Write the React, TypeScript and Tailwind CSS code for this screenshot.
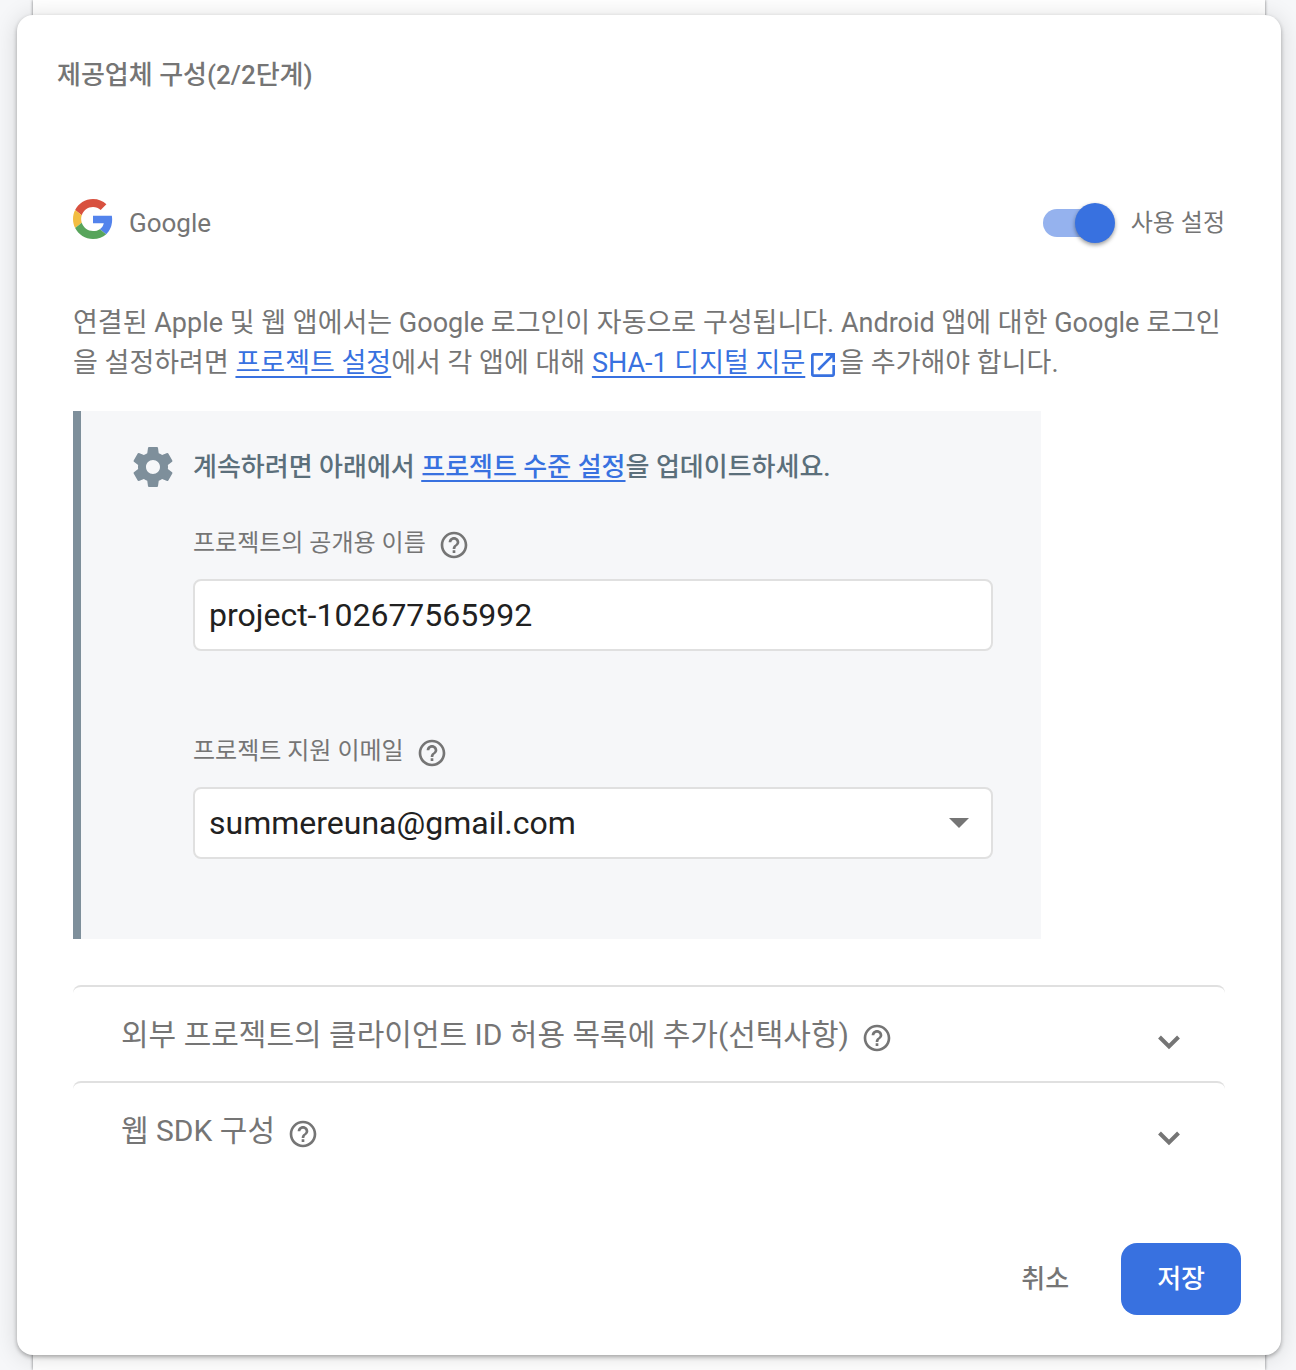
import { useState } from "react";
import { MdArrowDropDown, MdHelpOutline, MdOpenInNew } from "react-icons/md";

const linkClass = "text-[#3871e0] underline decoration-2 underline-offset-4";

const sections = [
  { id: "whitelist", title: "외부 프로젝트의 클라이언트 ID 허용 목록에 추가(선택사항)" },
  { id: "web-sdk", title: "웹 SDK 구성" },
];

function GoogleLogo() {
  return (
    <svg viewBox="0 0 48 48" className="h-10 w-10 shrink-0" aria-hidden="true">
      <path fill="#d8513f" d="M24 9.5c3.54 0 6.71 1.22 9.21 3.6l6.85-6.85C35.9 2.38 30.47 0 24 0 14.62 0 6.51 5.38 2.56 13.22l7.98 6.19C12.43 13.72 17.74 9.5 24 9.5z" />
      <path fill="#5383ec" d="M46.98 24.55c0-1.57-.15-3.09-.38-4.55H24v9.02h12.94c-.58 2.96-2.26 5.48-4.78 7.18l7.73 6c4.51-4.18 7.09-10.36 7.09-17.65z" />
      <path fill="#f2bd42" d="M10.53 28.59c-.48-1.45-.76-2.99-.76-4.59s.27-3.14.76-4.59l-7.98-6.19C.92 16.46 0 20.12 0 24c0 3.88.92 7.54 2.56 10.78l7.97-6.19z" />
      <path fill="#58a55c" d="M24 48c6.48 0 11.93-2.13 15.89-5.81l-7.73-6c-2.15 1.45-4.92 2.3-8.16 2.3-6.26 0-11.57-4.22-13.47-9.91l-7.98 6.19C6.51 42.62 14.62 48 24 48z" />
    </svg>
  );
}

function GearIcon() {
  return (
    <svg viewBox="0 0 24 24" fill="currentColor" className="h-12 w-12 shrink-0 text-[#7e8f9b]" aria-hidden="true">
      <path d="M19.43 12.98c.04-.32.07-.64.07-.98s-.03-.66-.07-.98l2.11-1.65c.19-.15.24-.42.12-.64l-2-3.46c-.12-.22-.39-.3-.61-.22l-2.49 1c-.52-.4-1.08-.73-1.69-.98l-.38-2.65C14.46 2.18 14.25 2 14 2h-4c-.25 0-.46.18-.49.42l-.38 2.65c-.61.25-1.17.59-1.69.98l-2.49-1c-.23-.09-.49 0-.61.22l-2 3.46c-.13.22-.07.49.12.64l2.11 1.65c-.04.32-.07.65-.07.98s.03.66.07.98l-2.11 1.65c-.19.15-.24.42-.12.64l2 3.46c.12.22.39.3.61.22l2.49-1c.52.4 1.08.73 1.69.98l.38 2.65c.03.24.24.42.49.42h4c.25 0 .46-.18.49-.42l.38-2.65c.61-.25 1.17-.59 1.69-.98l2.49 1c.23.09.49 0 .61-.22l2-3.46c.12-.22.07-.49-.12-.64l-2.11-1.65zM12 15.5c-1.93 0-3.5-1.57-3.5-3.5s1.57-3.5 3.5-3.5 3.5 1.57 3.5 3.5-1.57 3.5-3.5 3.5z" />
    </svg>
  );
}

function ChevronIcon() {
  return (
    <svg viewBox="0 0 44 44" className="mt-4 h-11 w-11 shrink-0" aria-hidden="true">
      <path d="M12.5 17l9.5 9.5 9.5-9.5" fill="none" stroke="currentColor" strokeWidth="4" />
    </svg>
  );
}

export default function App() {
  const [enabled, setEnabled] = useState(true);
  const [name, setName] = useState("project-102677565992");
  const [email, setEmail] = useState("summereuna@gmail.com");

  return (
    <div className="min-h-screen bg-[#f6f7f9] pr-[31px] pl-[33px] font-[Roboto,'Noto_Sans_CJK_KR',sans-serif] text-[#757575]">
      <main className="flow-root min-h-screen bg-white shadow-[0_0_3px_rgba(0,0,0,0.5)]">
        <section
          role="dialog"
          aria-labelledby="dialog-title"
          className="-mx-4 my-[15px] rounded-2xl bg-white px-10 pt-10 pb-10 shadow-[0_2px_4px_rgba(0,0,0,0.3),0_2px_24px_rgba(0,0,0,0.14)]"
        >
          <h1 id="dialog-title" className="text-[26px] leading-10 font-medium">제공업체 구성(2/2단계)</h1>

          <div className="mt-[100px] px-4">
            <div className="flex items-center justify-between">
              <div className="flex items-center gap-4">
                <GoogleLogo />
                <span className="pt-2 text-[26px] leading-10">Google</span>
              </div>
              <label className="flex items-center gap-4 pt-2 text-2xl leading-10">
                <span className="flex w-[72px] items-center">
                  <input
                    type="checkbox"
                    role="switch"
                    checked={enabled}
                    onChange={(e) => setEnabled(e.target.checked)}
                    className="peer h-7 w-16 appearance-none rounded-full bg-gray-300 checked:bg-[#95b2ee]"
                  />
                  <span className="pointer-events-none -ml-16 h-10 w-10 shrink-0 rounded-full bg-white shadow-[0_2px_4px_rgba(0,0,0,0.4)] peer-checked:-ml-8 peer-checked:bg-[#3871e0]" />
                </span>
                사용 설정
              </label>
            </div>

            <p className="mt-[60px] text-[27px] leading-10 break-all">
              연결된 Apple 및 웹 앱에서는 Google 로그인이 자동으로 구성됩니다. Android 앱에 대한 Google 로그인을 설정하려면{" "}
              <a href="#settings" className={linkClass}>프로젝트 설정</a>에서 각 앱에 대해{" "}
              <a href="#sha1" className={linkClass}>SHA-1 디지털 지문</a>
              <MdOpenInNew className="ml-[2px] inline-block h-8 w-8 text-[#3871e0]" />을 추가해야 합니다.
            </p>

            <div className="mt-7 flex max-w-[968px] gap-4 border-l-8 border-[#7e8f9b] bg-[#f6f7f9] pt-8 pr-12 pb-20 pl-12">
              <GearIcon />
              <div className="flex-1">
                <h2 className="text-[26px] leading-12 font-medium text-[#5b6f7b]">
                  계속하려면 아래에서 <a href="#project" className={linkClass}>프로젝트 수준 설정</a>을 업데이트하세요.
                </h2>

                <div className="mt-8 flex items-center gap-3">
                  <label htmlFor="project-name" className="text-2xl leading-10">프로젝트의 공개용 이름</label>
                  <MdHelpOutline className="mt-1 h-8 w-8" />
                </div>
                <input
                  id="project-name"
                  type="text"
                  value={name}
                  onChange={(e) => setName(e.target.value)}
                  className="mt-4 h-[72px] w-full rounded-lg border-2 border-[#e0e0e0] bg-white px-[14px] text-[32px] text-[#212121]"
                />

                <div className="mt-20 flex items-center gap-3">
                  <label htmlFor="project-email" className="text-2xl leading-10">프로젝트 지원 이메일</label>
                  <MdHelpOutline className="mt-1 h-8 w-8" />
                </div>
                <div className="relative mt-4">
                  <select
                    id="project-email"
                    value={email}
                    onChange={(e) => setEmail(e.target.value)}
                    className="block h-[72px] w-full appearance-none rounded-lg border-2 border-[#e0e0e0] bg-white px-[14px] text-[32px] text-[#212121]"
                  >
                    <option>summereuna@gmail.com</option>
                  </select>
                  <MdArrowDropDown className="pointer-events-none absolute top-[11px] right-[10px] h-12 w-12" />
                </div>
              </div>
            </div>

            <div className="mt-[46px]">
              {sections.map((section) => (
                <button
                  key={section.id}
                  type="button"
                  className="flex h-24 w-full items-center justify-between rounded-lg border-t-2 border-[#e0e0e0] pr-[34px] pl-12 text-left text-[30px]"
                >
                  <span className="flex items-center gap-3">
                    {section.title}
                    <MdHelpOutline className="mt-2 h-8 w-8 shrink-0" />
                  </span>
                  <ChevronIcon />
                </button>
              ))}
            </div>
          </div>

          <div className="mt-[66px] flex justify-end gap-4">
            <button type="button" className="h-[72px] rounded-2xl px-9 text-[26px] font-medium">취소</button>
            <button type="button" className="h-[72px] rounded-2xl bg-[#3871e0] px-9 text-[26px] font-medium text-white">저장</button>
          </div>
        </section>
      </main>
    </div>
  );
}
